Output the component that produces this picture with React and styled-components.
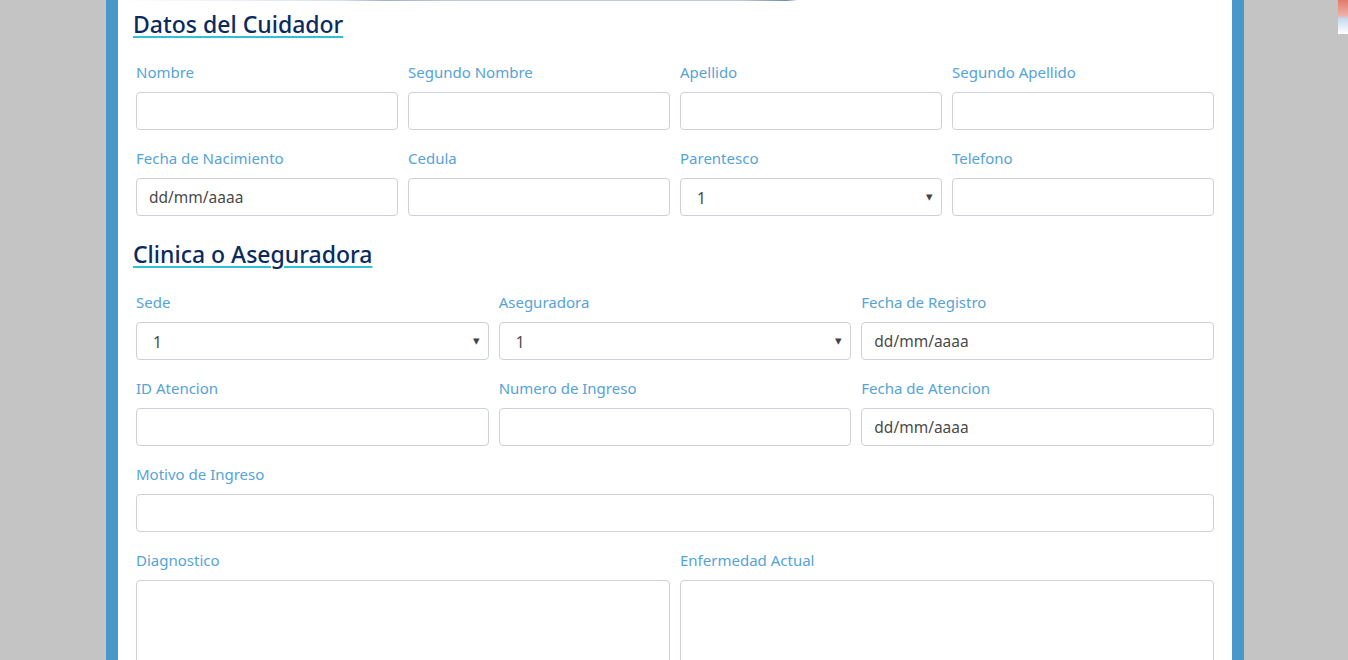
import React from 'react'
import styled, {createGlobalStyle} from 'styled-components'

const Global = createGlobalStyle`
  html, body {
    margin: 0;
    padding: 0;
    background: #c4c4c4;
    font-family: "Noto Sans", "Open Sans", sans-serif;
  }
`

const rows1 = [
  [
    {label: 'Nombre'},
    {label: 'Segundo Nombre'},
    {label: 'Apellido'},
    {label: 'Segundo Apellido'},
  ],
  [
    {label: 'Fecha de Nacimiento', type: 'date'},
    {label: 'Cedula'},
    {label: 'Parentesco', type: 'select'},
    {label: 'Telefono'},
  ],
]

const rows2 = [
  [
    {label: 'Sede', type: 'select'},
    {label: 'Aseguradora', type: 'select'},
    {label: 'Fecha de Registro', type: 'date'},
  ],
  [
    {label: 'ID Atencion'},
    {label: 'Numero de Ingreso'},
    {label: 'Fecha de Atencion', type: 'date'},
  ],
  [{label: 'Motivo de Ingreso'}],
  [
    {label: 'Diagnostico', type: 'area'},
    {label: 'Enfermedad Actual', type: 'area'},
  ],
]

const Control = ({type}) => {
  if (type === 'date') return <Input readOnly value="dd/mm/aaaa" />
  if (type === 'area') return <Area />
  if (type === 'select')
    return (
      <SelectBox>
        <span>1</span>
        <Caret>▾</Caret>
      </SelectBox>
    )
  return <Input readOnly value="" />
}

const FormRows = ({rows}) =>
  rows.map((row, i) => (
    <Row key={i} cols={row.length}>
      {row.map(f => (
        <Field key={f.label}>
          <Label>{f.label}</Label>
          <Control type={f.type} />
        </Field>
      ))}
    </Row>
  ))

const App = () => {
  return (
    <>
      <Global />
      <Page>
        <Panel>
          <TopStrip />
          <Title>Datos del Cuidador</Title>
          <FormRows rows={rows1} />
          <Title second>Clinica o Aseguradora</Title>
          <FormRows rows={rows2} />
        </Panel>
        <Corner />
      </Page>
    </>
  )
}

export default App

const Page = styled.div`
  display: flex;
  min-height: 660px;
  position: relative;
  overflow: hidden;
`

const Panel = styled.div`
  width: 1138px;
  margin-left: 106px;
  background: #fff;
  border-left: 12px solid #4898cc;
  border-right: 12px solid #4898cc;
  padding: 0 18px;
  box-sizing: border-box;
  height: 660px;
  overflow: hidden;
`

const TopStrip = styled.div`
  height: 1px;
  margin: 0 -18px 8px;
  background: linear-gradient(
    90deg,
    #fff 0%,
    #d8e0ee 20%,
    #9fb2cc 24%,
    #c3cad6 30%,
    #c3cad6 56%,
    #6d8db8 60%,
    #fff 61%,
    #fff 100%
  );
`

const Title = styled.h2`
  margin: ${p => (p.second ? '23px' : '0')} 0 23px -3px;
  font-size: 23px;
  line-height: 30px;
  font-weight: 500;
  color: #0b2b5e;
  text-decoration: underline;
  text-decoration-color: #34c0d4;
  text-decoration-thickness: 2px;
  text-underline-offset: 3px;
`

const Row = styled.div`
  display: grid;
  grid-template-columns: repeat(${p => p.cols}, 1fr);
  column-gap: 10px;
  margin-bottom: 18px;
`

const Field = styled.div`
  display: flex;
  flex-direction: column;
`

const Label = styled.label`
  font-size: 15px;
  line-height: 20px;
  color: #55a3d8;
  margin-bottom: 10px;
`

const Input = styled.input`
  height: 38px;
  box-sizing: border-box;
  border: 1px solid #cdd2d9;
  border-radius: 4px;
  padding: 0 12px;
  font-family: inherit;
  font-size: 15.5px;
  color: #4a4a4a;
  background: #fff;
  outline: none;
`

const SelectBox = styled.div`
  height: 38px;
  box-sizing: border-box;
  border: 1px solid #cdd2d9;
  border-radius: 4px;
  padding: 2px 8px 0 16px;
  display: flex;
  align-items: center;
  justify-content: space-between;
  font-size: 15.5px;
  color: #4a4a4a;
`

const Caret = styled.span`
  font-size: 13px;
  color: #444;
  margin-top: -4px;
`

const Area = styled.textarea`
  height: 100px;
  box-sizing: border-box;
  border: 1px solid #cdd2d9;
  border-radius: 4px;
  resize: none;
  outline: none;
`

const Corner = styled.div`
  position: absolute;
  top: 0;
  right: 0;
  width: 10px;
  height: 34px;
  background: linear-gradient(180deg, #e27a6a 0%, #f0b0a6 45%, #c6daf0 55%, #ffffff 100%);
`
